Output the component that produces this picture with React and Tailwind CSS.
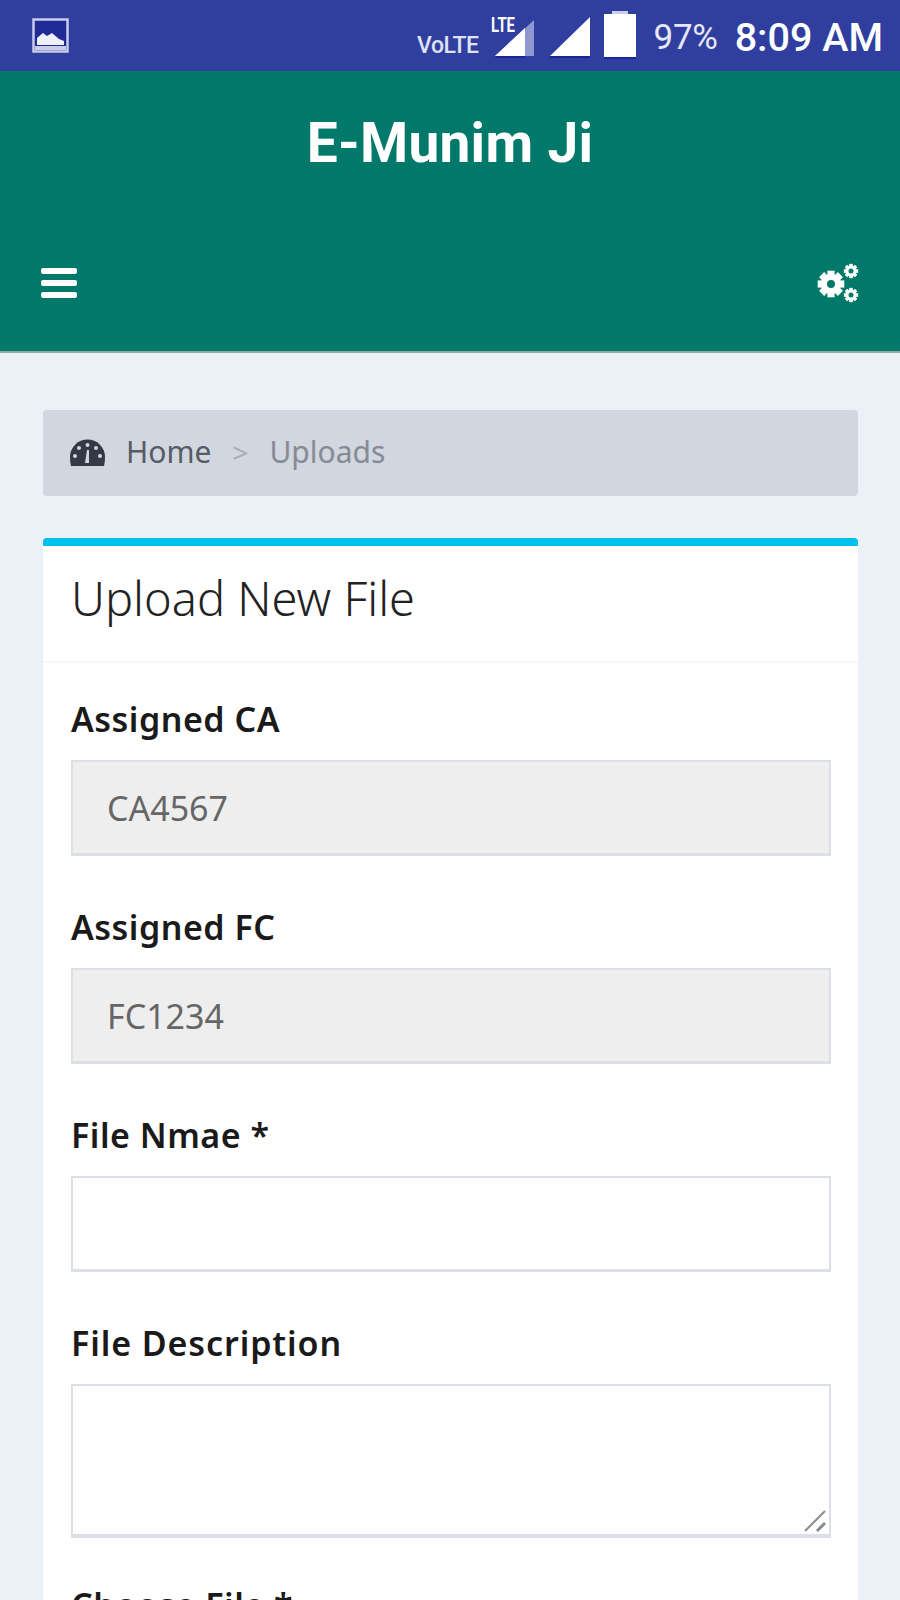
import React from "react";

const labelCls = "block h-[40px] mb-[21px] text-[34px] leading-[40px] font-semibold text-[#1a1a1a] tracking-[0.5px]";

const Field = ({ label, value, disabled }) => (
  <div className="mb-[51px]">
    <label className={labelCls}>{label}</label>
    <div className={`h-[96px] border-2 border-b-[3px] border-[#dcdfe5] flex items-center pl-[34px] pt-[2px] text-[34px] text-[#666] ${disabled ? "bg-[#eeeeee]" : "bg-white"}`}>{value}</div>
  </div>
);

const Gear = ({ cx, cy, r, sw, n }) => {
  const teeth = Array.from({ length: n }, (_, i) => (i * 360) / n);
  return (
    <g>
      {teeth.map((a) => (
        <rect key={a} x={cx - sw * 0.6} y={cy - r - sw * 1.05} width={sw * 1.2} height={sw * 1.2} fill="#fff" transform={`rotate(${a} ${cx} ${cy})`} />
      ))}
      <circle cx={cx} cy={cy} r={r} fill="none" stroke="#fff" strokeWidth={sw} />
    </g>
  );
};

export default function App() {
  return (
    <div className="w-[900px] h-[1600px] overflow-hidden bg-[#ecf0f7] font-['Noto_Sans',sans-serif]">
      <div className="h-[71px] bg-[#303f9f] flex items-center justify-between pl-[32px] pr-[17px]">
        <svg width="38" height="35" viewBox="0 0 38 35">
          <rect x="1.5" y="1.5" width="34" height="32" fill="#1f2a94" stroke="#c9cdea" strokeWidth="2.5" />
          <path d="M5 27 L5 20 L11 15 L15 18 L20 15 L27 21 L32 23 L32 27 Z" fill="#eef0fa" />
          <rect x="3" y="28" width="31" height="4" fill="#c9cdea" />
        </svg>
        <div className="flex items-center text-white">
          <span className="font-['Roboto',sans-serif] font-medium text-[23px] leading-none text-[#dfe2f2] mt-[20px] mr-[10px] tracking-[-0.5px]">VoLTE</span>
          <svg width="46" height="42" viewBox="0 0 46 42" className="mr-[15px] mt-[2px]">
            <path d="M6 40 L45 4 L45 40 Z" fill="#8f97cf" />
            <path d="M6 40 L36 12 L36 40 Z" fill="#fff" />
            <rect x="0" y="0" width="28" height="19" fill="#303f9f" />
            <text x="2" y="16" fontFamily="Roboto, sans-serif" fontWeight="700" fontSize="20" fill="#fff" textLength="24" lengthAdjust="spacingAndGlyphs">LTE</text>
            <path d="M6 42 L36 42 L36 40 L7 40 Z" fill="#1a2596" />
          </svg>
          <svg width="40" height="41" viewBox="0 0 40 41" className="mr-[14px] mt-[4px]">
            <path d="M0 39 L40 0 L40 39 Z" fill="#fff" />
            <rect x="0" y="39" width="40" height="2" fill="#1a2596" />
          </svg>
          <svg width="32" height="48" viewBox="0 0 32 48" className="mr-[18px] mb-[2px]">
            <path d="M8 0 H24 V3 H32 V46 H0 V3 H8 Z" fill="#fff" />
            <path d="M8 0 H24 V3 H8 Z" fill="#c9cdea" />
            <rect x="0" y="46" width="32" height="2" fill="#1a2596" />
          </svg>
          <span className="font-['Roboto',sans-serif] text-[35px] leading-none text-[#e6e8f5] mt-[4px] mr-[17px] tracking-[-0.3px]">97%</span>
          <span className="font-['Roboto',sans-serif] font-medium text-[39.5px] leading-none mt-[4px]">8:09 AM</span>
        </div>
      </div>

      <header className="h-[282px] bg-[#00796b] border-b-2 border-[#8fa9a6] flex flex-col">
        <h1 className="text-center font-['Roboto',sans-serif] font-bold text-[55px] leading-[60px] tracking-[0.3px] text-white mt-[42px]">E-Munim Ji</h1>
        <div className="flex items-center justify-between pl-[41px] pr-[39px] mt-[89px]">
          <div className="flex flex-col gap-[6px] w-[36px]">
            <span className="h-[6px] bg-white rounded-[2px]" />
            <span className="h-[6px] bg-white rounded-[2px]" />
            <span className="h-[6px] bg-white rounded-[2px]" />
          </div>
          <svg width="44" height="42" viewBox="0 0 44 42">
            <Gear cx={14} cy={22} r={7} sw={6} n={8} />
            <Gear cx={34} cy={9} r={4} sw={3} n={8} />
            <Gear cx={34} cy={33} r={4} sw={3} n={8} />
          </svg>
        </div>
      </header>

      <main className="pl-[43px] pr-[42px] pt-[57px]">
        <nav className="h-[86px] bg-[#d2d6de] rounded-[4px] flex items-center pl-[27px] text-[30px] mb-[42px]">
          <svg width="35" height="28" viewBox="0 0 35 28" className="mr-[21px]">
            <path d="M1 27 Q0 24 0 18 A17.5 17.5 0 0 1 35 18 Q35 24 34 27 Z" fill="#333a44" />
            <g fill="#d2d6de">
              <circle cx="17.5" cy="6" r="2" />
              <circle cx="9" cy="9" r="2" />
              <circle cx="26" cy="9" r="2" />
              <circle cx="5" cy="17" r="2" />
              <circle cx="30" cy="17" r="2" />
              <path d="M15 24 L19 24 L19 11 L17 11 Z" />
            </g>
          </svg>
          <span className="text-[#555c66] -mt-[3px]">Home</span>
          <span className="text-[#a7adb8] ml-[21px] text-[28px] -mt-[3px]">&gt;</span>
          <span className="text-[#858b96] ml-[21px] -mt-[3px]">Uploads</span>
        </nav>

        <section className="bg-white border-t-[8px] border-[#00c0ef] rounded-t-[4px] h-[1100px]">
          <div className="h-[117px] border-b-2 border-[#f7f7f7] pl-[28px] flex items-center">
            <h2 className="text-[47px] leading-none font-light text-[#222] pb-[10px]">Upload New File</h2>
          </div>
          <div className="pl-[28px] pr-[27px] pt-[36px]">
            <Field label="Assigned CA" value="CA4567" disabled />
            <Field label="Assigned FC" value="FC1234" disabled />
            <Field label="File Nmae *" />
            <div className="mb-[47px]">
              <label className={`${labelCls} tracking-[0.9px]`}>File Description</label>
              <div className="relative">
                <textarea className="block w-full h-[154px] border-2 border-b-[4px] border-[#dcdfe5] bg-white outline-none resize-none" />
                <svg width="24" height="24" viewBox="0 0 24 24" className="absolute right-[4px] bottom-[5px]">
                  <path d="M2 22 L22 2" stroke="#8a8a8a" strokeWidth="2" />
                  <path d="M14 22 L22 14" stroke="#8a8a8a" strokeWidth="3" />
                </svg>
              </div>
            </div>
            <label className="block text-[34px] leading-[40px] font-semibold text-[#1a1a1a] tracking-[0.5px]">Choose File *</label>
          </div>
        </section>
      </main>
    </div>
  );
}
